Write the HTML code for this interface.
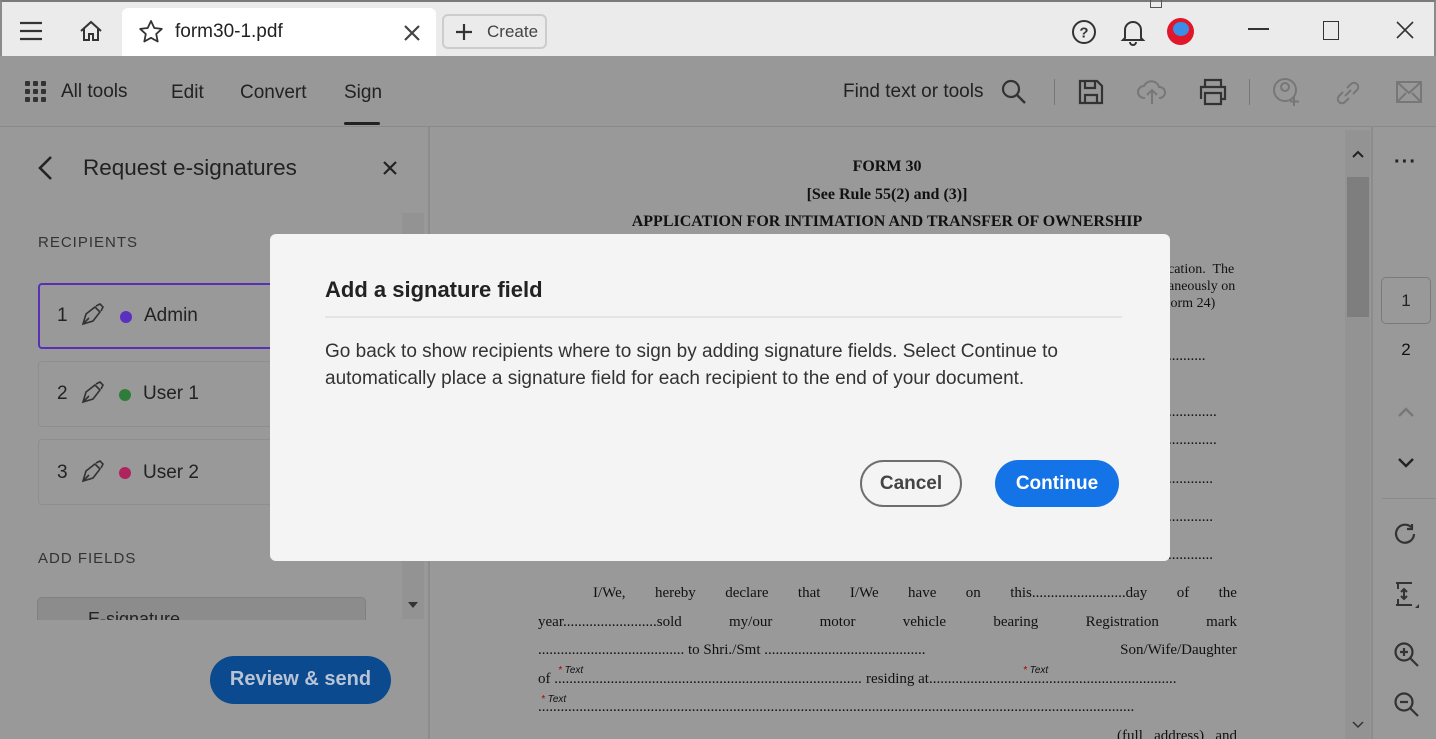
<!DOCTYPE html>
<html><head><meta charset="utf-8"><style>
*{margin:0;padding:0;box-sizing:border-box}
html,body{width:1436px;height:739px;overflow:hidden}
body{background:#999;font-family:"Liberation Sans","DejaVu Sans",sans-serif;position:relative;color:#1f1f1f}
.abs{position:absolute}
.tabbar{left:0;top:0;width:1436px;height:56px;background:#ebebeb;border-top:2px solid #7a7a7a;border-left:2px solid #8a8a8a;border-right:2px solid #8a8a8a}
.tab{left:122px;top:8px;width:314px;height:48px;background:#fff;border-radius:6px 6px 0 0}
.toolbar{left:0;top:56px;width:1436px;height:71px;background:#989898;border-bottom:1px solid #8a8a8a}
.t{font-size:19px;color:#222}
.left{left:0;top:127px;width:430px;height:612px;background:#999;border-right:2px solid #8c8c8c}
.card{left:38px;width:250px;height:66px;border:1px solid #8e8e8e;border-radius:4px}
.card span{position:absolute;font-size:19px;color:#222}
.dot{position:absolute;width:12px;height:12px;border-radius:50%}
.doc{font-family:"Liberation Serif",serif;color:#111;font-size:15px}
.ln{display:flex;justify-content:space-between;white-space:nowrap;height:28.5px}
.fill{flex:1;overflow:hidden;white-space:nowrap}
.dlg{left:270px;top:234px;width:900px;height:327px;background:#f4f4f4;border-radius:6px}
.btn{border-radius:24px;font-size:19px;font-weight:bold;text-align:center}
</style></head><body>
<div class="abs tabbar"></div>
<div class="abs" style="left:1150px;top:0;width:12px;height:8px;border:1px solid #555;border-top:none"></div>
<div class="abs tab"></div>
<svg class="abs" style="left:19px;top:21px" width="24" height="20"><path d="M1 2h22M1 10h22M1 18h22" stroke="#333" stroke-width="2.2"/></svg>
<svg class="abs" style="left:78px;top:19px" width="26" height="24"><path d="M3 12L13 3l10 9M6 10v11h5v-6h4v6h5V10" fill="none" stroke="#333" stroke-width="2"/></svg>
<svg class="abs" style="left:138px;top:19px" width="26" height="26"><path d="M13 2l3.3 7 7.5.9-5.6 5.1 1.5 7.5L13 18.8 6.3 22.5l1.5-7.5L2.2 9.9 9.7 9z" fill="none" stroke="#333" stroke-width="1.8" stroke-linejoin="round"/></svg>
<div class="abs" style="left:175px;top:21px;font-size:19px;color:#222">form30-1.pdf</div>
<svg class="abs" style="left:403px;top:24px" width="18" height="18"><path d="M2 2l14 14M16 2L2 16" stroke="#444" stroke-width="2.2"/></svg>
<div class="abs" style="left:442px;top:14px;width:105px;height:35px;border:2px solid #ccc;border-radius:6px;background:#ebebeb"></div>
<svg class="abs" style="left:455px;top:23px" width="18" height="18"><path d="M9 1v16M1 9h16" stroke="#333" stroke-width="2.2"/></svg>
<div class="abs" style="left:487px;top:22px;font-size:17px;color:#444">Create</div>
<svg class="abs" style="left:1071px;top:19px" width="26" height="26"><circle cx="13" cy="13" r="11" fill="none" stroke="#333" stroke-width="2"/><text x="13" y="18.5" font-size="15" font-weight="bold" text-anchor="middle" fill="#333" font-family="Liberation Sans">?</text></svg>
<svg class="abs" style="left:1120px;top:18px" width="26" height="28"><path d="M5 20V12a8 8 0 0116 0v8l2 2H3z M10 24a3 3 0 006 0" fill="none" stroke="#333" stroke-width="2"/></svg>
<div class="abs" style="left:1167px;top:18px;width:27px;height:27px;border-radius:50%;background:#e0162b"></div>
<div class="abs" style="left:1173px;top:22px;width:16px;height:14px;border-radius:50%;background:#3a8ee6"></div>
<div class="abs" style="left:1248px;top:28px;width:21px;height:2px;background:#333"></div>
<div class="abs" style="left:1323px;top:21px;width:16px;height:19px;border:1.6px solid #333"></div>
<svg class="abs" style="left:1396px;top:21px" width="18" height="18"><path d="M1 1l16 16M17 1L1 17" stroke="#333" stroke-width="1.6"/></svg>

<div class="abs toolbar"></div>
<svg class="abs" style="left:25px;top:81px" width="22" height="22"><g fill="#333"><rect x="0" y="0" width="5" height="5" rx="1"/><rect x="8" y="0" width="5" height="5" rx="1"/><rect x="16" y="0" width="5" height="5" rx="1"/><rect x="0" y="8" width="5" height="5" rx="1"/><rect x="8" y="8" width="5" height="5" rx="1"/><rect x="16" y="8" width="5" height="5" rx="1"/><rect x="0" y="16" width="5" height="5" rx="1"/><rect x="8" y="16" width="5" height="5" rx="1"/><rect x="16" y="16" width="5" height="5" rx="1"/></g></svg>
<div class="abs t" style="left:61px;top:81px">All tools</div>
<div class="abs t" style="left:171px;top:82px">Edit</div>
<div class="abs t" style="left:240px;top:82px">Convert</div>
<div class="abs t" style="left:344px;top:82px">Sign</div>
<div class="abs" style="left:344px;top:122px;width:36px;height:3px;background:#222;border-radius:2px"></div>
<div class="abs t" style="left:843px;top:81px">Find text or tools</div>
<svg class="abs" style="left:1001px;top:79px" width="26" height="26"><circle cx="10" cy="10" r="8" fill="none" stroke="#333" stroke-width="2.2"/><path d="M16 16l8 8" stroke="#333" stroke-width="2.4"/></svg>
<div class="abs" style="left:1054px;top:79px;width:1px;height:26px;background:#777"></div>
<svg class="abs" style="left:1078px;top:79px" width="26" height="26"><path d="M2 2h17l5 5v17H2z M7 2v7h10V2 M7 24v-8h12v8" fill="none" stroke="#333" stroke-width="2.2"/></svg>
<svg class="abs" style="left:1137px;top:77px" width="30" height="28"><path d="M8 21H7a6 6 0 010-12 8 8 0 0115 1 5 5 0 011 11h-1M15 27V13M10 18l5-5 5 5" fill="none" stroke="#777" stroke-width="2"/></svg>
<svg class="abs" style="left:1198px;top:78px" width="30" height="28"><path d="M7 8V2h16v6M3 21V9h24v12h-4M7 15h16v11H7z" fill="none" stroke="#333" stroke-width="2.2"/></svg>
<div class="abs" style="left:1249px;top:79px;width:1px;height:26px;background:#777"></div>
<svg class="abs" style="left:1272px;top:77px" width="30" height="30"><circle cx="13" cy="13" r="11" fill="none" stroke="#777" stroke-width="2"/><circle cx="13" cy="10" r="4" fill="none" stroke="#777" stroke-width="2"/><path d="M22 20v9M18 24.5h9" stroke="#777" stroke-width="2"/></svg>
<svg class="abs" style="left:1334px;top:79px" width="28" height="28"><path d="M11 17l6-6M9 13l-4 4a4 4 0 006 6l4-4M19 15l4-4a4 4 0 00-6-6l-4 4" fill="none" stroke="#777" stroke-width="2"/></svg>
<svg class="abs" style="left:1396px;top:81px" width="26" height="22"><rect x="1" y="1" width="24" height="20" fill="none" stroke="#777" stroke-width="2"/><path d="M1 1l12 11 12-11M1 21l9-9M25 21l-9-9" fill="none" stroke="#777" stroke-width="2"/></svg>

<div class="abs left"></div>
<svg class="abs" style="left:36px;top:155px" width="18" height="26"><path d="M15 2L4 13l11 11" fill="none" stroke="#222" stroke-width="2.6"/></svg>
<div class="abs" style="left:83px;top:155px;font-size:22.5px;color:#222">Request e-signatures</div>
<svg class="abs" style="left:383px;top:161px" width="14" height="14"><path d="M1 1l12 12M13 1L1 13" stroke="#222" stroke-width="2.2"/></svg>
<div class="abs" style="left:38px;top:234px;font-size:15px;letter-spacing:1px;color:#333">RECIPIENTS</div>
<div class="abs card" style="top:283px;height:66px;border:2.5px solid #5a2fb8;width:250px"><span style="left:17px;top:20px">1</span><span style="left:104px;top:20px">Admin</span><div class="dot" style="left:80px;top:26px;background:#5b2fc0"></div></div>
<div class="abs card" style="top:361px;height:66px"><span style="left:18px;top:21px">2</span><span style="left:104px;top:21px">User 1</span><div class="dot" style="left:80px;top:27px;background:#2e7d3a"></div></div>
<div class="abs card" style="top:439px;height:66px"><span style="left:18px;top:22px">3</span><span style="left:104px;top:22px">User 2</span><div class="dot" style="left:80px;top:27px;background:#b0245e"></div></div>
<svg class="abs" style="left:80px;top:303px" width="24" height="200"><g fill="none" stroke="#333" stroke-width="1.6"><path d="M3 21l3-10 9-7 5 5-7 9zM3 21l6-6M16 3l4-2 3 3-2 4"/><path transform="translate(0,78)" d="M3 21l3-10 9-7 5 5-7 9zM3 21l6-6M16 3l4-2 3 3-2 4"/><path transform="translate(0,157)" d="M3 21l3-10 9-7 5 5-7 9zM3 21l6-6M16 3l4-2 3 3-2 4"/></g></svg>
<div class="abs" style="left:402px;top:213px;width:22px;height:406px;background:#939393"></div>
<div class="abs" style="left:408px;top:602px;border:5px solid transparent;border-top:6px solid #333"></div>
<div class="abs" style="left:38px;top:550px;font-size:15px;letter-spacing:1px;color:#333">ADD FIELDS</div>
<div class="abs" style="left:37px;top:597px;width:329px;height:23px;background:#8c8c8c;border:1px solid #808080;border-bottom:none;border-radius:5px 5px 0 0;overflow:hidden"><span style="position:absolute;left:50px;top:11px;font-size:18px;color:#222">E-signature</span></div>
<div class="abs" style="left:0;top:620px;width:428px;height:119px;background:#999"></div>
<div class="abs btn" style="left:210px;top:656px;width:181px;height:48px;background:#0b4a8e;color:#b8c4d6;line-height:47px;font-size:20px">Review &amp; send</div>

<!-- doc -->
<div class="abs doc" style="left:430px;top:158px;width:914px;text-align:center;font-weight:bold;font-size:16px">FORM 30</div>
<div class="abs doc" style="left:430px;top:186px;width:914px;text-align:center;font-weight:bold;font-size:16px">[See Rule 55(2) and (3)]</div>
<div class="abs doc" style="left:430px;top:213px;width:914px;text-align:center;font-weight:bold;font-size:16px">APPLICATION FOR INTIMATION AND TRANSFER OF OWNERSHIP</div>
<div class="abs doc" style="left:1168px;top:261px;font-size:14px;line-height:17px">cation.&nbsp; The<br>aneously on<br>'orm 24)</div>
<div class="abs doc" style="left:1168px;top:348px">..........</div>
<div class="abs doc" style="left:1168px;top:404px">.............</div>
<div class="abs doc" style="left:1168px;top:432px">.............</div>
<div class="abs doc" style="left:1168px;top:471px">............</div>
<div class="abs doc" style="left:1168px;top:509px">............</div>
<div class="abs doc" style="left:1168px;top:547px">............</div>
<div class="abs doc" style="left:538px;top:585px;width:699px;font-size:15px">
<div class="ln" style="padding-left:55px"><span>I/We,</span><span>hereby</span><span>declare</span><span>that</span><span>I/We</span><span>have</span><span>on</span><span>this.........................day</span><span>of</span><span>the</span></div>
<div class="ln"><span>year.........................sold</span><span>my/our</span><span>motor</span><span>vehicle</span><span>bearing</span><span>Registration</span><span>mark</span></div>
<div class="ln"><span>....................................... to Shri./Smt ...........................................</span><span>Son/Wife/Daughter</span></div>
<div class="ln" style="justify-content:flex-start"><span>of&nbsp;</span><span class="fill">..................................................................................................</span><span>&nbsp;residing at</span><span class="fill">..................................................................</span></div>
<div class="ln"><span class="fill">...............................................................................................................................................................</span></div>
<div class="ln" style="justify-content:flex-end"><span>(full&nbsp;&nbsp; address)&nbsp;&nbsp; and</span></div>
</div>
<div class="abs" style="left:558px;top:665px;font-size:10px;font-style:italic;color:#111"><span style="color:#a00">*</span> Text</div>
<div class="abs" style="left:1023px;top:665px;font-size:10px;font-style:italic;color:#111"><span style="color:#a00">*</span> Text</div>
<div class="abs" style="left:541px;top:694px;font-size:10px;font-style:italic;color:#111"><span style="color:#a00">*</span> Text</div>

<!-- scrollbar -->
<div class="abs" style="left:1345px;top:130px;width:25px;height:609px;background:#939393"></div>
<div class="abs" style="left:1347px;top:177px;width:22px;height:140px;background:#7e7e7e"></div>
<svg class="abs" style="left:1351px;top:149px" width="14" height="10"><path d="M2 8l5-5 5 5" fill="none" stroke="#222" stroke-width="2"/></svg>
<svg class="abs" style="left:1351px;top:720px" width="14" height="10"><path d="M2 2l5 5 5-5" fill="none" stroke="#333" stroke-width="1.5"/></svg>
<div class="abs" style="left:1371px;top:127px;width:2px;height:612px;background:#8c8c8c"></div>
<div class="abs" style="left:1394px;top:151px;font-size:20px;letter-spacing:1px;color:#222;font-weight:bold">···</div>
<div class="abs" style="left:1381px;top:277px;width:50px;height:47px;border:1px solid #7a7a7a;border-radius:5px;text-align:center;line-height:45px;font-size:17px;color:#222">1</div>
<div class="abs" style="left:1381px;top:340px;width:50px;text-align:center;font-size:17px;color:#111">2</div>
<svg class="abs" style="left:1397px;top:406px" width="18" height="12"><path d="M2 10l7-7 7 7" fill="none" stroke="#777" stroke-width="2.4"/></svg>
<svg class="abs" style="left:1397px;top:457px" width="18" height="12"><path d="M2 2l7 7 7-7" fill="none" stroke="#222" stroke-width="2.4"/></svg>
<div class="abs" style="left:1382px;top:498px;width:54px;height:1px;background:#8a8a8a"></div>
<svg class="abs" style="left:1393px;top:522px" width="26" height="26"><path d="M21 12a9 9 0 11-3-7M19 2v5h-5" fill="none" stroke="#333" stroke-width="2.2"/></svg>
<svg class="abs" style="left:1393px;top:580px" width="28" height="30"><path d="M3 3h16M3 25h16M5 3v6M5 19v6M11 9v10M8 12l3-3 3 3M8 16l3 3 3-3" fill="none" stroke="#333" stroke-width="2"/><path d="M26 24l-4 4h4z" fill="#333"/></svg>
<svg class="abs" style="left:1393px;top:641px" width="28" height="28"><circle cx="11" cy="11" r="8.5" fill="none" stroke="#333" stroke-width="2.2"/><path d="M17 17l8 8M11 7v8M7 11h8" stroke="#333" stroke-width="2.2"/></svg>
<svg class="abs" style="left:1393px;top:691px" width="28" height="28"><circle cx="11" cy="11" r="8.5" fill="none" stroke="#333" stroke-width="2.2"/><path d="M17 17l8 8M7 11h8" stroke="#333" stroke-width="2.2"/></svg>

<!-- dialog -->
<div class="abs dlg"></div>
<div class="abs" style="left:325px;top:277px;font-size:22px;font-weight:bold;color:#222">Add a signature field</div>
<div class="abs" style="left:325px;top:316px;width:797px;height:2px;background:#e4e4e4"></div>
<div class="abs" style="left:325px;top:338px;font-size:19px;line-height:27px;color:#333;white-space:nowrap">Go back to show recipients where to sign by adding signature fields. Select Continue to<br>automatically place a signature field for each recipient to the end of your document.</div>
<div class="abs btn" style="left:860px;top:460px;width:102px;height:47px;border:2.5px solid #6e6e6e;color:#444;line-height:44px">Cancel</div>
<div class="abs btn" style="left:995px;top:460px;width:124px;height:47px;background:#1473e6;color:#fff;line-height:47px">Continue</div>
</body></html>
